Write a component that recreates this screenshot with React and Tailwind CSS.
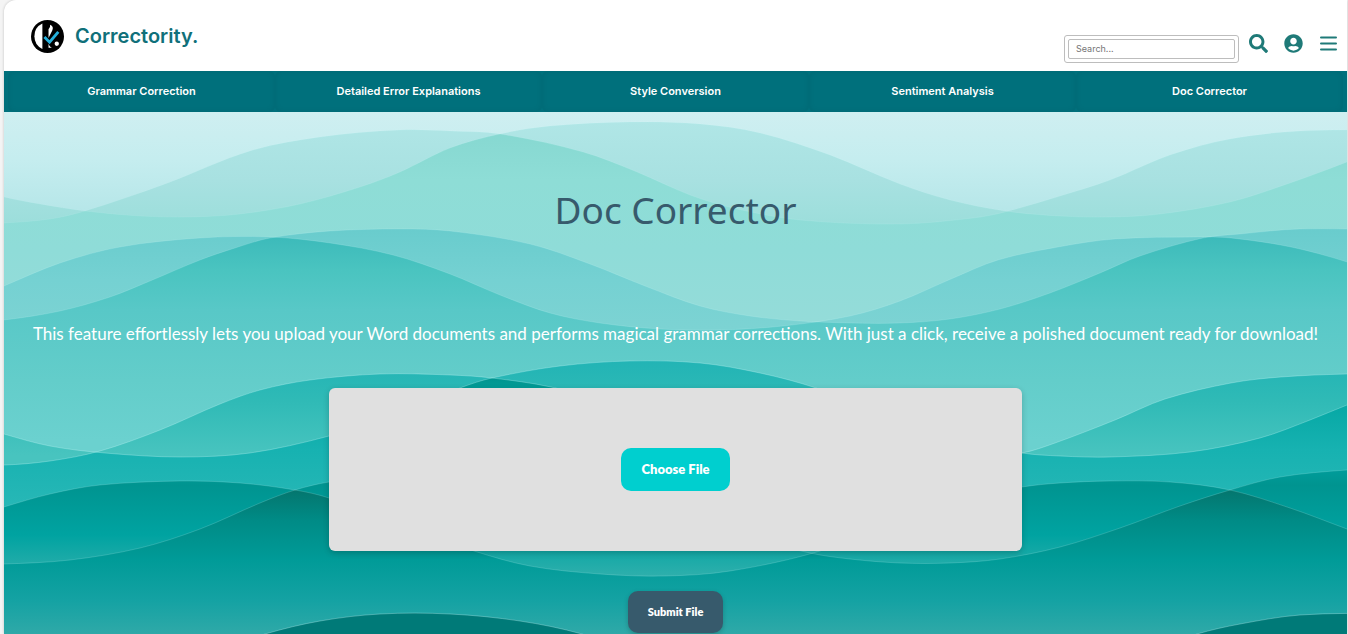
import { FaSearch, FaUserCircle } from "react-icons/fa";

const WAVES = [
  {
    name: "mist",
    edge: 0.1,
    a: [[-40,224],[4,223],[50,219],[85,211],[165,184],[250,151],[320,137],[400,130],[450,131],[500,134],[583,152],[637,172],[690,195],[733,208],[800,220],[900,224],[973,218],[1005,212],[1060,196],[1110,180],[1170,155],[1230,139],[1300,131],[1390,130]],
    b: [[-40,184],[4,197],[40,204],[85,211],[140,216],[190,217],[240,214],[300,204],[360,187],[400,172],[450,148],[500,134],[550,126],[630,122],[700,124],[760,133],[830,155],[900,184],[950,200],[1005,211],[1060,216],[1110,217],[1160,214],[1230,202],[1290,183],[1347,162],[1390,144]],
    strip: [[122,"#b0e6e6"],[180,"#a8e1e1"],[224,"#9cdedb"]],
    core: [[130,"#86d8d1"],[180,"#8eddd6"],[250,"#8fdcd8"],[320,"#94dcd9"]],
  },
  {
    name: "lagoon",
    edge: 0.15,
    a: [[-40,305],[4,286],[60,263],[120,247],[200,238],[270,237],[330,243],[393,255],[450,274],[500,295],[550,313],[600,323],[660,329],[720,330],[783,326],[850,316],[900,301],[951,279],[998,260],[1058,247],[1115,239],[1198,237],[1231,238],[1291,247],[1347,262],[1390,278]],
    b: [[-40,323],[4,320],[60,311],[110,297],[150,281],[200,260],[235,248],[270,238],[330,231],[400,229],[450,231],[530,244],[590,264],[645,286],[700,306],[750,316],[800,321],[850,323],[900,323],[950,319],[1000,309],[1050,293],[1100,273],[1140,256],[1203,238],[1240,234],[1300,229],[1390,230]],
    strip: [[229,"#69cccd"],[280,"#75d1d2"],[328,"#7cd3d3"]],
    core: [[236,"#3cbaba"],[270,"#4ac4c0"],[310,"#58c8c7"],[380,"#63cdca"],[440,"#6bd1cf"]],
  },
  {
    name: "reef",
    edge: 0.28,
    a: [[-40,464],[4,465],[50,461],[100,451],[160,430],[220,404],[260,390],[310,380],[380,374],[450,375],[492,378],[551,387],[640,410],[740,445],[840,464],[940,464],[1022,453],[1055,443],[1115,420],[1165,399],[1231,383],[1281,377],[1347,374],[1390,374]],
    b: [[-40,420],[4,434],[50,446],[105,453],[180,457],[250,453],[329,436],[400,413],[460,388],[492,378],[560,366],[630,361],[700,363],[760,373],[816,388],[880,413],[950,439],[1022,453],[1060,456],[1110,457],[1190,452],[1260,438],[1310,420],[1347,405],[1390,389]],
    strip: [[361,"#22b4b5"],[400,"#2fbab6"],[455,"#48c4bf"]],
    core: [[378,"#00958f"],[405,"#06a8a5"],[450,"#17b2b1"],[515,"#2ab8b7"]],
  },
  {
    name: "deep",
    edge: 0.18,
    a: [[-40,521],[4,507],[50,494],[100,485],[180,481],[240,483],[295,490],[329,498],[400,525],[474,551],[530,566],[600,574],[665,576],[730,571],[820,551],[900,520],[970,497],[1022,487],[1060,483],[1110,481],[1170,482],[1230,490],[1290,508],[1347,529],[1390,545]],
    b: [[-40,564],[4,564],[70,560],[140,548],[200,529],[260,503],[295,490],[329,482],[420,470],[530,475],[640,500],[740,535],[810,553],[850,559],[900,563],[950,563],[1000,559],[1060,547],[1120,528],[1180,506],[1230,490],[1280,477],[1347,470],[1390,469]],
    strip: [[470,"#009c9a"],[485,"#009490"],[535,"#00a3a1"],[576,"#2eafac"]],
    core: [[490,"#04766e"],[520,"#008b86"],[560,"#009b98"],[600,"#14a2a3"],[634,"#2fa9a8"]],
  },
];

const SEABED = [[150,670],[265,634],[320,621],[380,614],[450,614],[520,621],[582,634],[660,660],[900,700],[1100,665],[1197,634],[1240,624],[1300,615],[1390,613]];

// Smooth curve through points ordered by x, using the slope between each point's neighbours.
function curve(points) {
  const slope = (i) => {
    const before = points[Math.max(i - 1, 0)];
    const after = points[Math.min(i + 1, points.length - 1)];
    return (after[1] - before[1]) / (after[0] - before[0]);
  };
  let d = `M${points[0][0]} ${points[0][1]}`;
  for (let i = 0; i < points.length - 1; i++) {
    const [x1, y1] = points[i];
    const [x2, y2] = points[i + 1];
    const third = (x2 - x1) / 3;
    d += ` C${x1 + third} ${y1 + slope(i) * third} ${x2 - third} ${y2 - slope(i + 1) * third} ${x2} ${y2}`;
  }
  return d;
}

const area = (points) => `${curve(points)} V900 H${points[0][0]} Z`;

function Gradient({ id, stops }) {
  const top = stops[0][0];
  const bottom = stops[stops.length - 1][0];
  return (
    <linearGradient id={id} gradientUnits="userSpaceOnUse" x1="0" x2="0" y1={top} y2={bottom}>
      {stops.map(([y, color]) => (
        <stop key={y} offset={(y - top) / (bottom - top)} stopColor={color} />
      ))}
    </linearGradient>
  );
}

function Waves() {
  return (
    <svg
      className="absolute inset-0 -z-10 h-full w-full"
      viewBox="4 112 1343 522"
      preserveAspectRatio="xMidYMin slice"
      aria-hidden="true"
    >
      <defs>
        <Gradient id="sky" stops={[[112, "#cfeff1"], [160, "#c5edef"], [215, "#b5e6e8"]]} />
        {WAVES.map((w) => (
          <g key={w.name}>
            <Gradient id={`${w.name}-strip`} stops={w.strip} />
            <Gradient id={`${w.name}-core`} stops={w.core} />
            <clipPath id={`${w.name}-clip`}>
              <path d={area(w.a)} />
            </clipPath>
          </g>
        ))}
      </defs>
      <rect x="-40" y="0" width="1430" height="900" fill="url(#sky)" />
      {WAVES.map((w) => (
        <g key={w.name}>
          <path d={area(w.a)} fill={`url(#${w.name}-strip)`} />
          <path d={area(w.b)} fill={`url(#${w.name}-strip)`} />
          <g clipPath={`url(#${w.name}-clip)`}>
            <path d={area(w.b)} fill={`url(#${w.name}-core)`} />
          </g>
          <path d={curve(w.a)} fill="none" stroke="#d5ffff" strokeOpacity={w.edge} />
          <path d={curve(w.b)} fill="none" stroke="#d5ffff" strokeOpacity={w.edge} />
        </g>
      ))}
      <path d={area(SEABED)} fill="#007a78" />
      <path d={curve(SEABED)} fill="none" stroke="#d5ffff" strokeOpacity="0.3" />
    </svg>
  );
}

function Logo() {
  return (
    <svg className="size-[33px]" viewBox="0 0 32 32" aria-hidden="true">
      <circle cx="16" cy="16" r="16" fill="#000" />
      <path d="M11 3.5A13.6 13.6 0 0 0 11 28Z" fill="#fff" />
      <path d="M18.500 4.500q4 1.500 2 6l-3.500 7V9q2-2 1.500-4.500Z" fill="#fff" />
      <path d="M17 23q1 3.500 4 4h-4Z" fill="#fff" />
      <circle cx="25" cy="23" r="2.1" fill="#fff" />
      <path d="M13 16.500l5 5L26.500 11.500" fill="none" stroke="#25b0dc" strokeWidth="2.800" />
    </svg>
  );
}

const NAV = [
  "Grammar Correction",
  "Detailed Error Explanations",
  "Style Conversion",
  "Sentiment Analysis",
  "Doc Corrector",
];

export default function App() {
  return (
    <div className="min-h-screen bg-[#f4f4f4] pr-px pl-1 font-['Inter',sans-serif]">
      <div className="flex min-h-screen flex-col overflow-hidden rounded-tl-xl bg-white shadow-[0_0_3px_rgba(0,0,0,0.2)]">
        <header className="flex h-[71px] items-center justify-between pr-[9px] pl-[27px]">
          <a href="#home" className="flex items-center gap-[11px] pt-px text-xl font-semibold text-[#10707a]">
            <Logo />
            Correctority.
          </a>
          <div className="flex items-center pt-4 text-[#1f7a78]">
            <form role="search" className="mt-2.5 mr-2.5 w-[175px] rounded-[3px] border border-[#bdbdbd] p-[3px]">
              <input
                type="search"
                aria-label="Search"
                placeholder="Search..."
                className="block h-5 w-full rounded-[2px] border border-[#bdbdbd] px-[7px] text-[9px] text-[#555] placeholder:text-[#757575]"
              />
            </form>
            <button type="button" aria-label="Submit search" className="mr-4">
              <FaSearch className="size-[19px]" />
            </button>
            <button type="button" aria-label="Account" className="mr-4">
              <FaUserCircle className="size-[19px]" />
            </button>
            <button type="button" aria-label="Menu">
              <svg className="size-[19px]" viewBox="0 0 19 19" stroke="currentColor" strokeWidth="2" strokeLinecap="round" aria-hidden="true">
                <path d="M2 3.500h15M2 9.500h15M2 15.500h15" />
              </svg>
            </button>
          </div>
        </header>

        <nav className="grid h-[41px] shrink-0 grid-cols-5 bg-[#00707c] px-1">
          {NAV.map((item) => (
            <a
              key={item}
              href="#nav"
              className="flex items-center justify-center rounded-md text-[11px] font-semibold text-white shadow-[inset_0_0_6px_rgba(0,0,0,0.07)]"
            >
              {item}
            </a>
          ))}
        </nav>

        <main className="relative isolate flex flex-1 flex-col items-center">
          <Waves />
          <h1 className="mt-[72px] font-['Noto_Sans',sans-serif] text-[37px] leading-[52px] text-[#375a6c]">
            Doc Corrector
          </h1>
          <p className="mt-[84px] px-4 text-center font-['Lato',sans-serif] text-[17px] leading-7 text-white">
            This feature effortlessly lets you upload your Word documents and performs magical grammar corrections. With just a click, receive a polished document ready for download!
          </p>
          <form className="flex w-full flex-col items-center font-['Lato',sans-serif] font-extrabold text-white">
            <div className="mt-10 flex h-[163px] w-[693px] max-w-full items-center justify-center rounded-md bg-[#e0e0e0] shadow-[0_2px_6px_rgba(0,0,0,0.2)]">
              <button type="button" className="h-[43px] rounded-[10px] bg-[#00cfcf] px-5 text-[13px]">
                Choose File
              </button>
            </div>
            <button type="submit" className="mt-10 h-[42px] rounded-[10px] bg-[#375a6c] px-5 text-[11px] shadow-[0_2px_5px_rgba(0,0,0,0.2)]">
              Submit File
            </button>
          </form>
        </main>
      </div>
    </div>
  );
}
